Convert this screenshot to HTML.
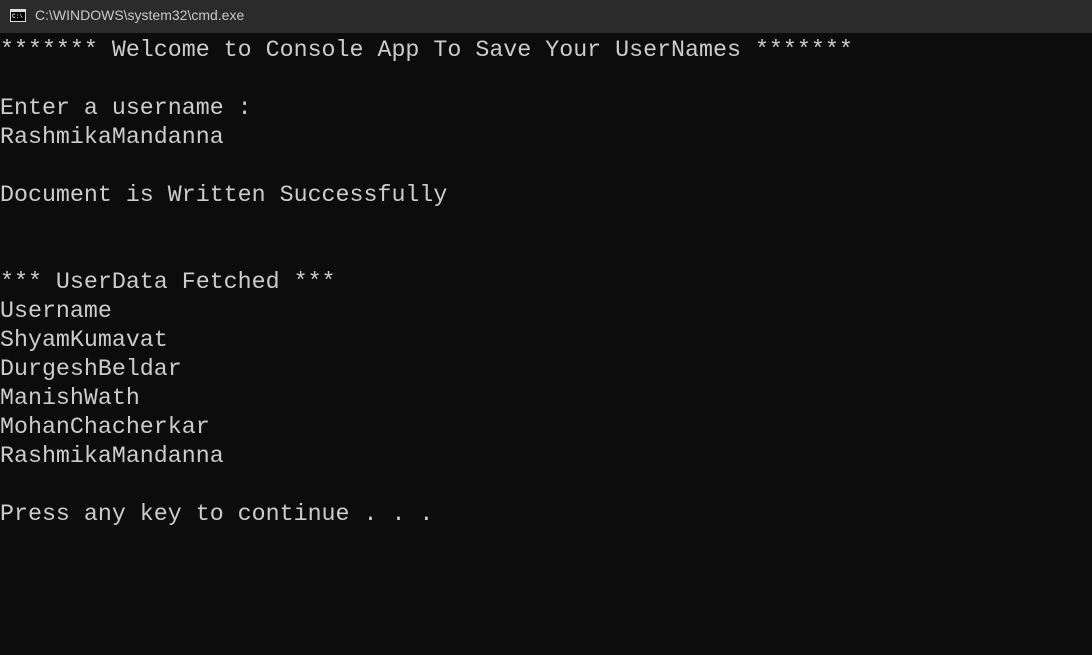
<!DOCTYPE html>
<html><head><meta charset="utf-8"><style>
html,body{margin:0;padding:0;width:1092px;height:655px;overflow:hidden;background:#0c0c0c;}
.bar{position:absolute;left:0;top:0;width:1092px;height:33px;background:#2b2b2b;}
.bar .t{position:absolute;left:35px;top:7px;font:14px "Liberation Sans",sans-serif;color:#c8c8c8;}
.ic{position:absolute;left:10px;top:9px;width:16px;height:13px;border:1px solid #ddd;box-sizing:border-box;background:#000;}
.ic:before{content:"";position:absolute;left:0;top:0;right:0;height:2px;background:#ddd;}
.ic span{position:absolute;left:1px;top:3px;font:bold 6px "Liberation Mono",monospace;color:#ddd;}
pre{position:absolute;left:0;top:36px;margin:0;font-family:"Liberation Mono",monospace;font-size:23.3px;line-height:29px;color:#cccccc;}
</style></head><body>
<div class="bar"><div class="ic"><span>C:\</span></div><div class="t">C:\WINDOWS\system32\cmd.exe</div></div>
<pre>******* Welcome to Console App To Save Your UserNames *******

Enter a username :
RashmikaMandanna

Document is Written Successfully


*** UserData Fetched ***
Username
ShyamKumavat
DurgeshBeldar
ManishWath
MohanChacherkar
RashmikaMandanna

Press any key to continue . . .</pre>
</body></html>
